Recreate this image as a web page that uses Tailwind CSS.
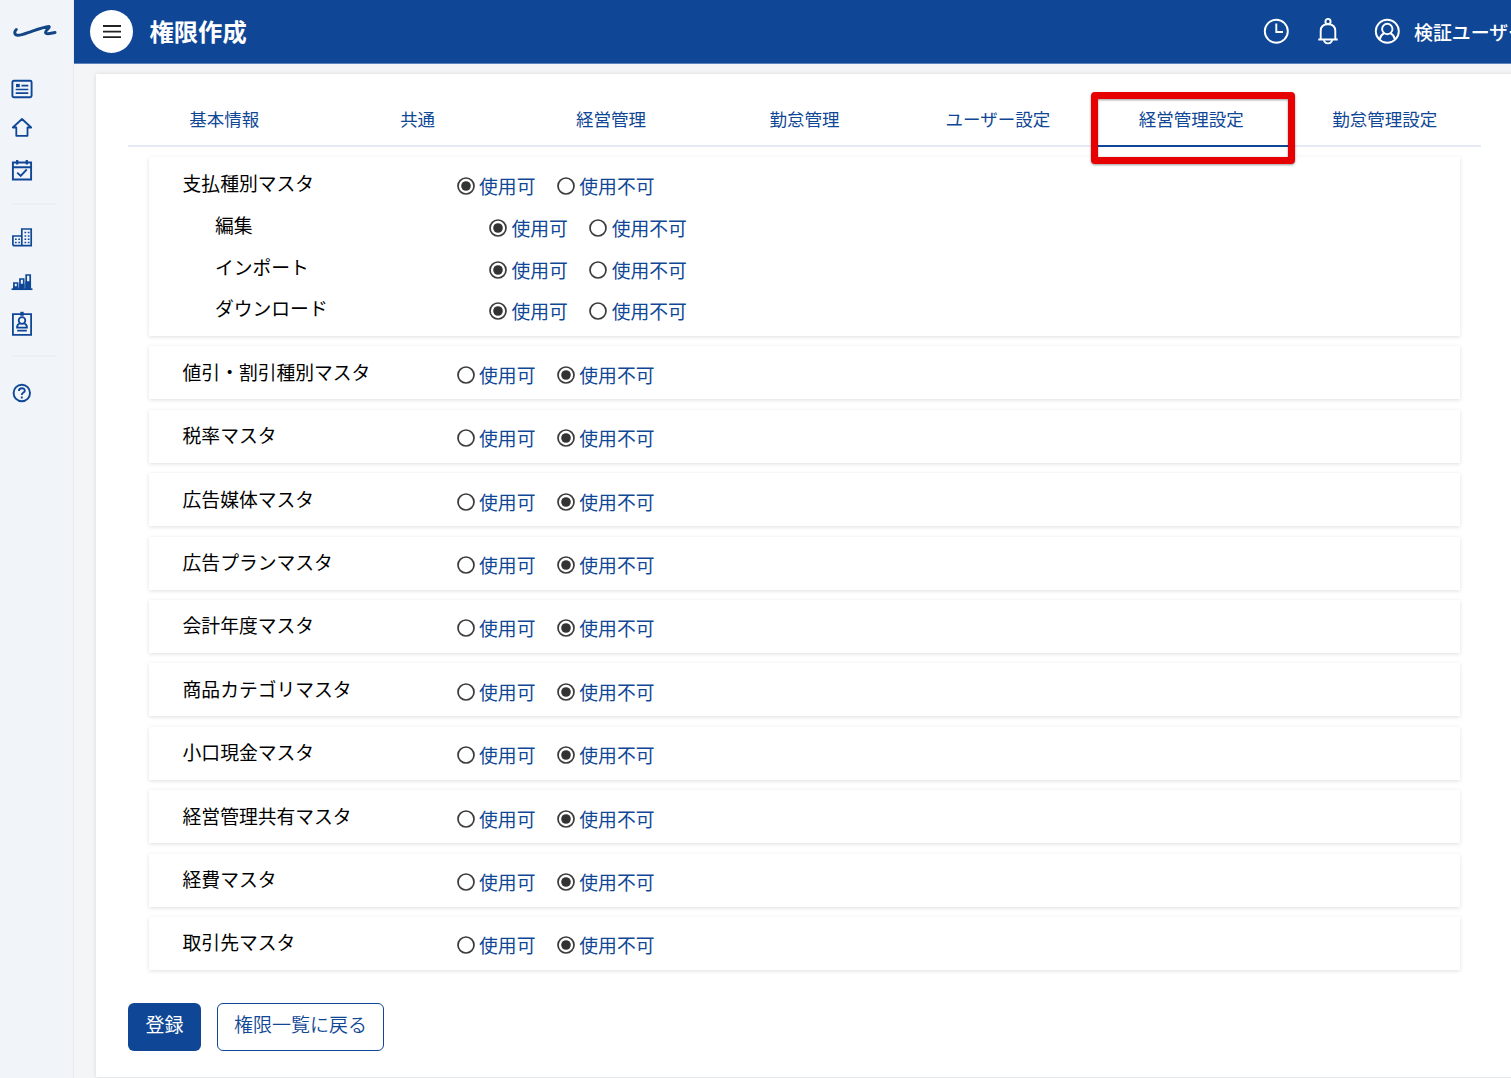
<!DOCTYPE html>
<html lang="ja">
<head>
<meta charset="utf-8">
<title>権限作成</title>
<script src="https://cdn.jsdelivr.net/npm/@tailwindcss/browser@4"></script>
</head>
<body class="flex h-[1078px] w-[1511px] overflow-hidden bg-[#f4f5f7] font-['Noto_Sans_CJK_JP',sans-serif] text-[#0f4796]">
<aside class="flex w-[74px] shrink-0 flex-col border-r border-[#e6eaf1] bg-[#f1f5fa] pl-[11px]">
  <svg class="mt-[23px] ml-px h-4 w-[46px]" viewBox="0 0 46 16" fill="none" stroke="#124684" stroke-width="3" stroke-linecap="round" stroke-linejoin="round"><path d="M4.300 6.500C2.300 8.500 2.300 10.500 3.800 11.800C6 13.300 12 11.200 16 9.700C23 7.300 31 4 37 3.500C38.500 4.500 33.500 7 33.500 9.300C34 12 39.500 10 43 9.500"/></svg>
  <svg class="mt-10 h-[20px] w-[22px]" viewBox="0 0 22 20" fill="none" stroke="currentColor" stroke-width="1.900"><rect x="1.400" y="1.800" width="19.200" height="16.400" rx="1.500"/><path d="M10.500 6.700h6.800M4.700 10.500h12.600M4.700 14.200h12.600" stroke-width="1.700"/><path d="M5 4.900h3.800v3.300H5z" fill="currentColor" stroke="none"/></svg>
  <svg class="mt-[18px] h-[22px] w-[22px]" viewBox="0 0 22 22" fill="none" stroke="currentColor" stroke-width="1.800" stroke-linejoin="round"><path d="M11 2L1.800 10.500H5.300V18.800H16.500V10.500H20.200Z"/></svg>
  <svg class="mt-[20px] h-[22px] w-[22px]" viewBox="0 0 22 22" fill="none" stroke="currentColor" stroke-width="1.900"><path d="M1.900 3.500H20.100V20.500H1.900ZM1.900 8.200H20.100"/><path d="M6.200 1V5.500M15.800 1V5.500" stroke-width="2.200"/><path d="M6.200 13.600L9.700 17L15.800 10.300"/></svg>
  <div class="mt-[22px] ml-[2px] h-[2px] w-[43px] bg-[#ebeff5]"></div>
  <svg class="mt-[22px] h-[20px] w-[22px]" viewBox="0 0 22 20" fill="none" stroke="currentColor" stroke-width="1.700"><path d="M1.900 18.600V9H10.800V18.600M10.800 18.600V2H20.200V18.600H1.900Z"/><path d="M13.500 5.500h1.700M16.800 5.500h1.700M13.500 9h1.700M16.800 9h1.700M13.500 12.200h1.700M16.800 12.200h1.700M13.500 15.500h1.700M16.800 15.500h1.700M4 12.200h1.700M7.300 12.200h1.700M4 15.500h1.700M7.300 15.500h1.700" stroke-width="1.400"/></svg>
  <svg class="mt-[25px] h-[19px] w-[22px]" viewBox="0 0 22 19" fill="none" stroke="currentColor" stroke-width="1.700"><path d="M.5 17.200H21.500"/><path d="M2.900 17V11H6.600V17M9 17V7H12.700V17M15.200 17V3H19.200V17"/><path d="M3 15h3.500v2H3zM9 12.500h3.700V17H9zM15.200 10h4v7h-4z" fill="currentColor"/></svg>
  <svg class="mt-[20px] h-[25px] w-[22px]" viewBox="0 0 22 25" fill="none" stroke="currentColor" stroke-width="1.800"><path d="M1.900 3.200H20.100V23.800H1.900Z"/><path d="M9.300 .8h3.400v4H9.300z" fill="currentColor" stroke="none"/><circle cx="11" cy="9.500" r="3.300"/><path d="M8.800 12.200C7 13 6 14.500 6 16.700H16C16 14.500 15 13 13.200 12.200M6.200 19.700H15.800"/></svg>
  <div class="mt-[19px] ml-[2px] h-[2px] w-[43px] bg-[#ebeff5]"></div>
  <svg class="mt-[26px] h-[20px] w-[22px]" viewBox="0 0 22 20" fill="none" stroke="currentColor" stroke-width="1.900"><circle cx="10.800" cy="10" r="8.200"/><path d="M7.900 8C7.900 4.300 13.800 4.300 13.800 7.700C13.800 9.700 10.800 9.500 10.800 12M10.800 13.500V15.400"/></svg>
</aside>
<div class="flex min-w-0 flex-1 flex-col">
  <header class="flex h-16 shrink-0 items-center overflow-hidden border-b border-[#5b82b9] bg-[#0f4796] pl-4 text-white">
    <div class="flex size-[43px] items-center justify-center rounded-full bg-white">
      <svg class="size-5" viewBox="0 0 20 20" stroke="#222" stroke-width="1.800"><path d="M1 4H19M1 9.700H19M1 15.200H19"/></svg>
    </div>
    <h1 class="ml-[16.5px] pb-px text-[24.3px] leading-8 font-bold whitespace-nowrap">権限作成</h1>
    <div class="ml-auto flex shrink-0 items-center pb-px">
      <svg class="size-[26px]" viewBox="0 0 26 26" fill="none" stroke="currentColor" stroke-width="1.900"><circle cx="13.300" cy="13.200" r="11.500"/><path d="M13.300 5.500V14H20"/></svg>
      <svg class="ml-[28px] h-[28px] w-[22px]" viewBox="0 0 22 28" fill="none" stroke="currentColor" stroke-width="1.900"><circle cx="11" cy="4.500" r="2.600"/><path d="M1.300 22.500H20.700M3.700 22V14C3.700 9.500 6.500 7.200 11 7.200S18.300 9.500 18.300 14V22M7 22.800C7.300 27.500 14.700 27.500 15 22.800"/></svg>
      <svg class="ml-[35px] size-[26px]" viewBox="0 0 26 26" fill="none" stroke="currentColor" stroke-width="1.900"><circle cx="13.300" cy="13.200" r="11.500"/><circle cx="13.300" cy="11" r="5.200"/><path d="M5.600 21.500C6.300 18 8.300 16.200 10.300 15.200M16.300 15.200C18.300 16.200 20.300 18 21 21.500"/></svg>
      <span class="ml-[14px] w-[97px] pt-[2px] text-[18.9px] leading-8 font-medium whitespace-nowrap">検証ユーザー</span>
    </div>
  </header>
  <main class="mt-2.5 ml-[22px] h-[1003px] w-[1500px] bg-white pl-8 shadow-[0_0_4px_rgba(0,0,0,0.12)]">
    <nav class="relative flex h-[73px] w-[1353px] border-b-2 border-[#e6eaf5] text-[17.5px] leading-[26px]">
      <div class="flex-1 pt-8 text-center">基本情報</div>
      <div class="flex-1 pt-8 pl-px text-center">共通</div>
      <div class="flex-1 pt-8 pl-px text-center">経営管理</div>
      <div class="flex-1 pt-8 pl-px text-center">勤怠管理</div>
      <div class="flex-1 pt-8 pl-px text-center">ユーザー設定</div>
      <div class="-mb-0.5 flex-1 border-b-2 border-[#0f4796] pt-8 pl-px text-center">経営管理設定</div>
      <div class="flex-1 pt-8 pl-px text-center">勤怠管理設定</div>
      <div class="absolute top-[18px] left-[963px] h-[72px] w-[204px] rounded-[4px] border-[7px] border-[#e60000] drop-shadow-[0_1px_1px_rgba(0,0,0,0.4)]"></div>
    </nav>
    <div id="cards" class="mt-[10px] ml-[21px] flex w-[1311px] flex-col gap-[10.4px] text-[18.8px] leading-[28px]"></div>
    <div class="mt-[33px] flex gap-4 text-[19px] leading-[28px]">
      <button class="h-12 w-[73px] rounded-md bg-[#0f4796] pb-[5px] text-white">登録</button>
      <button class="h-12 w-[167px] rounded-md border border-[#0f4796] pb-[5px] font-[350] whitespace-nowrap">権限一覧に戻る</button>
    </div>
  </main>
</div>
<script>
const groups = [
  [['支払種別マスタ', true], ['編集', true], ['インポート', true], ['ダウンロード', true]],
  ...['値引・割引種別マスタ', '税率マスタ', '広告媒体マスタ', '広告プランマスタ', '会計年度マスタ', '商品カテゴリマスタ',
    '小口現金マスタ', '経営管理共有マスタ', '経費マスタ', '取引先マスタ'].map(name => [[name, false]])
];
const radio = (label, on) => `<label class="flex items-center gap-[4.5px]"><svg class="mt-[2px] size-[18px]" viewBox="0 0 18 18"><circle cx="9" cy="9" r="8" fill="#fff" stroke="#3b3b3b" stroke-width="1.700"/>${on ? '<circle cx="9" cy="9" r="4.800" fill="#333"/>' : ''}</svg><span class="relative top-px">${label}</span></label>`;
document.getElementById('cards').innerHTML = groups.map(rows => {
  const box = rows.length > 1 ? 'h-[179px] pt-[12px]' : 'h-[53px] pt-[11.4px]';
  return `<section class="${box} shrink-0 bg-white shadow-[0_1px_4px_rgba(0,0,0,0.13)]">${rows.map(([name, on], i) =>
    `<div class="${i ? 'pl-[66px]' : 'pl-[33.6px]'} flex h-[41.8px] items-start"><div class="w-[274px] text-black">${name}</div><div class="mt-[2px] flex gap-[21.4px]">${radio('使用可', on)}${radio('使用不可', !on)}</div></div>`).join('')}</section>`;
}).join('');
</script>
</body>
</html>
